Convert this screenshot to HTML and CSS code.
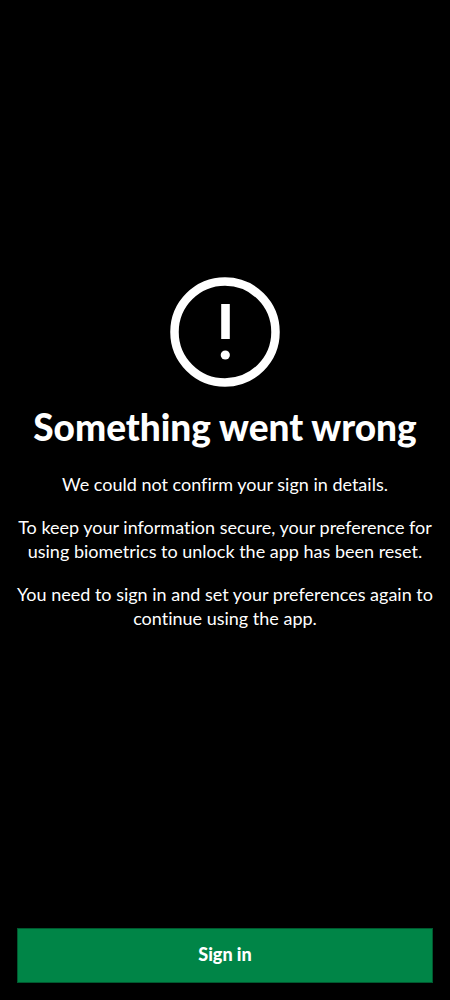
FILE: index.html
```html
<!DOCTYPE html>
<html lang="en">
<head>
<meta charset="utf-8">
<meta name="viewport" content="width=device-width, initial-scale=1">
<title>Something went wrong</title>
<link rel="stylesheet" href="styles.css">
</head>
<body>
<div class="screen">
  <main class="message">
    <svg class="icon" viewBox="0 0 110 110" aria-hidden="true">
      <circle cx="55" cy="55" r="50.5" fill="none" stroke="currentColor" stroke-width="8.5"/>
      <path d="M51.2 27h8.6v35h-8.6z" fill="currentColor"/>
      <circle cx="55.3" cy="78" r="4.6" fill="currentColor"/>
    </svg>
    <h1 class="title">Something went wrong</h1>
    <p class="text">We could not confirm your sign in details.</p>
    <p class="text">To keep your information secure, your preference for using biometrics to unlock the app has been reset.</p>
    <p class="text">You need to sign in and set your preferences again to continue using the app.</p>
  </main>
  <footer class="actions">
    <button class="button" type="button">Sign in</button>
  </footer>
</div>
</body>
</html>
```

FILE: styles.css
```css
* {
  box-sizing: border-box;
}

body {
  margin: 0;
  background: #000;
  color: #fff;
  font-family: Lato, "Liberation Sans", sans-serif;
  font-variant-ligatures: none;
}

.screen {
  display: flex;
  flex-direction: column;
  min-height: 100vh;
}

.message {
  flex: 1;
  display: flex;
  flex-direction: column;
  align-items: center;
  justify-content: center;
  padding: 0 16px 5px;
  text-align: center;
}

.icon {
  width: 110px;
  height: 110px;
}

.title {
  margin: 19px 0 24px;
  font-size: 37px;
  line-height: 42px;
  font-weight: 900;
}

.text {
  margin: 0 0 19px;
  font-size: 18px;
  line-height: 24px;
}

.text:last-child {
  margin-bottom: 0;
}

.actions {
  padding: 17px;
}

.button {
  display: block;
  width: 100%;
  height: 55px;
  padding: 0 0 4px;
  border: 1px solid #00592f;
  background: #008547;
  color: #fff;
  font-family: inherit;
  font-size: 18px;
  font-weight: 900;
}
```
